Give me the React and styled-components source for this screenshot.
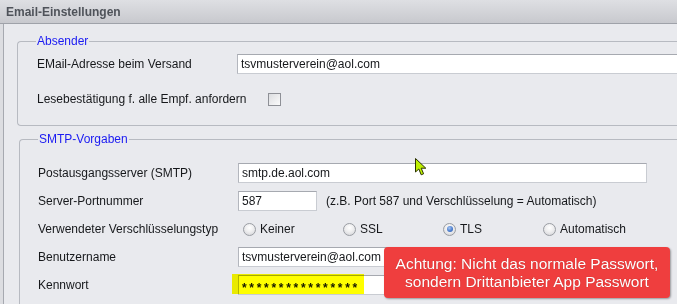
import React from "react";
import styled, { createGlobalStyle } from "styled-components";

const GlobalStyle = createGlobalStyle`
  html, body {
    margin: 0;
    padding: 0;
    width: 677px;
    height: 304px;
    overflow: hidden;
    background: #e9eaee;
  }
  body {
    font-family: "Liberation Sans", Arial, sans-serif;
    font-size: 12px;
    color: #16181b;
  }
`;

const Page = styled.div`
  position: relative;
  width: 677px;
  height: 304px;
  display: flex;
  flex-direction: column;
  overflow: hidden;
`;

const Header = styled.div`
  height: 23px;
  flex: none;
  display: flex;
  align-items: center;
  padding-left: 6px;
  background: linear-gradient(#dedfe3, #c8c9ce);
  border-bottom: 1px solid #9fa2a9;
  font-weight: bold;
  font-size: 12px;
  color: #4f535a;
`;

const Body = styled.div`
  flex: 1;
  display: flex;
  padding-left: 3px;
  background: #dcdde1;
`;

const Panel = styled.div`
  flex: 1;
  border-left: 1px solid #a6a9b0;
  background: #e9eaee;
  padding: 17px 0 0 13px;
`;

const Group = styled.div`
  position: relative;
  border: 1px solid #b7bac1;
  border-right: none;
  border-radius: 4px 0 0 4px;
  margin-left: ${(p) => p.$indent || 0}px;
  margin-top: ${(p) => p.$top || 0}px;
  padding: ${(p) => p.$padTop}px 0 ${(p) => p.$padBottom}px ${(p) => p.$padLeft}px;
  display: flex;
  flex-direction: column;
  gap: ${(p) => p.$gap}px;
`;

const Legend = styled.span`
  position: absolute;
  top: -8px;
  left: 18px;
  padding: 0 1px;
  line-height: 14px;
  background: #e9eaee;
  color: #1a1af2;
  font-size: 12px;
`;

const Row = styled.div`
  display: flex;
  align-items: center;
  height: 20px;
`;

const Label = styled.span`
  flex: none;
  width: ${(p) => p.$width || 200}px;
  white-space: nowrap;
`;

const Field = styled.div`
  position: relative;
  box-sizing: border-box;
  height: 20px;
  width: ${(p) => p.$width}px;
  flex: none;
  background: #ffffff;
  border: 1px solid #c9ccd2;
  border-top-color: #a6a9b0;
  border-left-color: #b3b6bd;
  padding-left: 3px;
  display: flex;
  align-items: center;
  white-space: nowrap;
  color: #16181b;
`;

const Stars = styled.span`
  position: relative;
  top: 3px;
  letter-spacing: 2.7px;
  font-weight: bold;
`;

const Highlight = styled.span`
  position: absolute;
  left: -7px;
  top: -2px;
  width: 132px;
  height: 20px;
  background: #ffff00;
  mix-blend-mode: multiply;
  pointer-events: none;
`;

const Checkbox = styled.span`
  box-sizing: border-box;
  width: 13px;
  height: 13px;
  border: 1px solid #8e9096;
  background: linear-gradient(135deg, #dcdde0, #fbfbfb);
`;

const Hint = styled.span`
  margin-left: 9px;
  white-space: nowrap;
`;

const RadioGroup = styled.div`
  display: flex;
  padding-left: 5px;
`;

const RadioItem = styled.label`
  width: 100px;
  display: flex;
  align-items: center;
  gap: 4px;
`;

const RadioDot = styled.span`
  position: relative;
  box-sizing: border-box;
  width: 13px;
  height: 13px;
  border-radius: 50%;
  border: 1px solid #9a9da3;
  background: radial-gradient(circle at 50% 35%, #ffffff 0%, #eeeeef 45%, #cfd0d4 100%);
  &::after {
    content: "";
    display: ${(p) => (p.$checked ? "block" : "none")};
    position: absolute;
    left: 2.5px;
    top: 2.5px;
    width: 6px;
    height: 6px;
    border-radius: 50%;
    background: radial-gradient(circle at 40% 35%, #a9c6f0 0%, #4d7fcf 55%, #2c5aa8 100%);
  }
`;

const Callout = styled.div`
  position: absolute;
  left: 384px;
  top: 247px;
  width: 286px;
  height: 51px;
  box-sizing: border-box;
  border-radius: 4px;
  background: #ef3e3e;
  box-shadow: 1px 1px 2px rgba(0, 0, 0, 0.35);
  color: #ffffff;
  font-size: 15.5px;
  line-height: 18px;
  text-align: center;
  display: flex;
  flex-direction: column;
  justify-content: center;
  text-shadow: 0 0 1px rgba(120, 0, 0, 0.5);
`;

const Cursor = styled.svg`
  position: absolute;
  left: 414px;
  top: 157px;
`;

const options = [
  { label: "Keiner", checked: false },
  { label: "SSL", checked: false },
  { label: "TLS", checked: true },
  { label: "Automatisch", checked: false },
];

export default function App() {
  return (
    <Page>
      <GlobalStyle />
      <Header>Email-Einstellungen</Header>
      <Body>
        <Panel>
          <Group $padTop={12} $padBottom={16} $padLeft={19} $gap={15}>
            <Legend>Absender</Legend>
            <Row>
              <Label>EMail-Adresse beim Versand</Label>
              <Field $width={460}>tsvmusterverein@aol.com</Field>
            </Row>
            <Row>
              <Label $width={231}>Lesebestätigung f. alle Empf. anfordern</Label>
              <Checkbox />
            </Row>
          </Group>
          <Group $top={13} $indent={2} $padTop={23} $padBottom={20} $padLeft={18} $gap={8}>
            <Legend>SMTP-Vorgaben</Legend>
            <Row>
              <Label>Postausgangsserver (SMTP)</Label>
              <Field $width={409}>smtp.de.aol.com</Field>
            </Row>
            <Row>
              <Label>Server-Portnummer</Label>
              <Field $width={79}>587</Field>
              <Hint>(z.B. Port 587 und Verschlüsselung = Automatisch)</Hint>
            </Row>
            <Row>
              <Label>Verwendeter Verschlüsselungstyp</Label>
              <RadioGroup>
                {options.map((o) => (
                  <RadioItem key={o.label}>
                    <RadioDot $checked={o.checked} />
                    {o.label}
                  </RadioItem>
                ))}
              </RadioGroup>
            </Row>
            <Row>
              <Label>Benutzername</Label>
              <Field $width={409}>tsvmusterverein@aol.com</Field>
            </Row>
            <Row>
              <Label>Kennwort</Label>
              <Field $width={409}>
                <Stars>****************</Stars>
                <Highlight />
              </Field>
            </Row>
          </Group>
        </Panel>
      </Body>
      <Callout>
        <span>Achtung: Nicht das normale Passwort,</span>
        <span>sondern Drittanbieter App Passwort</span>
      </Callout>
      <Cursor width="14" height="20" viewBox="0 0 14 20">
        <path
          d="M1.5 1.5 L1.5 15 L4.8 12 L7.2 17.8 L9.6 16.8 L7.2 11.2 L11.8 11.2 Z"
          fill="#bdf000"
          stroke="#2c3300"
          strokeWidth="1"
          strokeLinejoin="round"
        />
      </Cursor>
    </Page>
  );
}
